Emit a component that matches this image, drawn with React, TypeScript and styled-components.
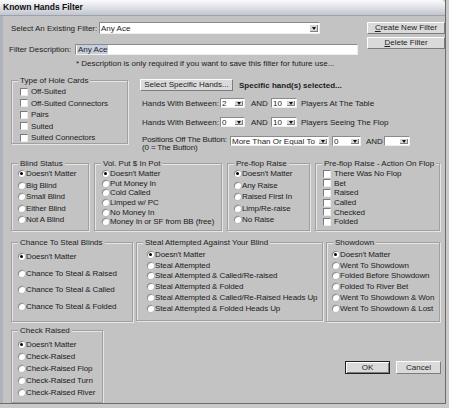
import React from 'react';
import styled, { createGlobalStyle } from 'styled-components';

const GlobalStyle = createGlobalStyle`
  html, body {
    margin: 0;
    padding: 0;
    background: #c9c9c9;
  }
  body {
    font-family: "Liberation Sans", Arial, sans-serif;
    font-size: 8px;
    color: #1c1c1c;
  }
`;

const Window = styled.div`
  width: 446px;
  height: 404px;
  box-sizing: border-box;
  border-right: 1px solid #6b6b6b;
  border-bottom: 1px solid #6b6b6b;
  background: #c3c3c3;
  display: flex;
  flex-direction: column;
  overflow: hidden;
`;

const TitleBar = styled.div`
  flex: none;
  height: 15px;
  padding-left: 3px;
  background: linear-gradient(#fbfbfd, #dcdee4 55%, #c2c5cf);
  border-bottom: 1px solid #9da1ab;
  border-top-right-radius: 4px;
  font-size: 8.5px;
  font-weight: bold;
  line-height: 15px;
  color: #111;
`;

const Body = styled.div`
  flex: 1;
  display: flex;
  flex-direction: column;
  padding: 6px 4px 0 8px;
  border-left: 3px solid #aeb2bd;
`;

const TopArea = styled.div`
  display: flex;
  margin-right: -4px;
`;

const LeftCol = styled.div`
  width: 356px;
  display: flex;
  flex-direction: column;
`;

const FieldRow = styled.div<{ $mt?: number; $ml?: number; $h: number }>`
  display: flex;
  align-items: center;
  height: ${p => p.$h}px;
  margin-top: ${p => p.$mt || 0}px;
  margin-left: ${p => p.$ml || 0}px;
`;

const Label = styled.span<{ $w: number }>`
  flex: none;
  width: ${p => p.$w}px;
  white-space: nowrap;
`;

const TextInput = styled.div<{ $w: number }>`
  width: ${p => p.$w}px;
  height: 100%;
  box-sizing: border-box;
  background: #fff;
  border: 1px solid;
  border-color: #8a8a8a #eeeeee #eeeeee #8a8a8a;
  display: flex;
  align-items: center;
  padding-left: 1px;
`;

const Selected = styled.span`
  background: #c7cedd;
  padding: 0 1px;
`;

const Note = styled.div`
  margin-top: 4px;
  padding-left: 65px;
  line-height: 9px;
  white-space: nowrap;
`;

const ButtonCol = styled.div`
  display: flex;
  flex-direction: column;
  gap: 3px;
`;

const Button = styled.button<{ $w: number; $h?: number; $default?: boolean }>`
  flex: none;
  width: ${p => p.$w}px;
  height: ${p => p.$h || 12}px;
  padding: 0;
  margin: 0;
  box-sizing: border-box;
  background: #dadada;
  border: 1px solid;
  border-color: ${p => (p.$default ? '#222' : '#fdfdfd #7c7c7c #7c7c7c #fdfdfd')};
  box-shadow: ${p => (p.$default ? 'inset 1px 1px 0 #fff, inset -1px -1px 0 #7c7c7c' : 'none')};
  font-family: "Liberation Sans", Arial, sans-serif;
  font-size: 8px;
  color: #1c1c1c;
  line-height: 1;
  cursor: default;
`;

const Select = styled.div<{ $w: number; $ml?: number }>`
  flex: none;
  width: ${p => p.$w}px;
  height: 100%;
  margin-left: ${p => p.$ml || 0}px;
  box-sizing: border-box;
  background: #fff;
  border: 1px solid;
  border-color: #8a8a8a #eeeeee #eeeeee #8a8a8a;
  display: flex;
  align-items: stretch;
`;

const SelectText = styled.span`
  flex: 1;
  padding-left: 1px;
  display: flex;
  align-items: center;
  white-space: nowrap;
  overflow: hidden;
`;

const DropButton = styled.span`
  flex: none;
  width: 9px;
  margin: 1px;
  background: #d6d6d6;
  box-shadow: inset 1px 1px 0 #fff, inset -1px -1px 0 #808080;
  display: flex;
  align-items: center;
  justify-content: center;
  &::after {
    content: '';
    border-left: 2.5px solid transparent;
    border-right: 2.5px solid transparent;
    border-top: 3px solid #111;
  }
`;

const MiddleRow = styled.div`
  display: flex;
  margin-top: 12px;
`;

const Controls = styled.div`
  margin-left: 12px;
  margin-top: -1px;
  display: flex;
  flex-direction: column;
`;

const BoldText = styled.span`
  margin-left: 6px;
  font-weight: bold;
  white-space: nowrap;
`;

const AndLabel = styled.span<{ $w: number; $pl: number }>`
  flex: none;
  width: ${p => p.$w}px;
  padding-left: ${p => p.$pl}px;
  box-sizing: border-box;
`;

const TrailText = styled.span`
  margin-left: 4px;
  white-space: nowrap;
`;

const TwoLineLabel = styled.span`
  flex: none;
  width: 88px;
  align-self: flex-start;
  line-height: 8px;
  letter-spacing: -0.15px;
  white-space: nowrap;
`;

const GroupRow = styled.div<{ $mt: number; $gap: number }>`
  display: flex;
  gap: ${p => p.$gap}px;
  margin-top: ${p => p.$mt}px;
`;

const GroupBox = styled.div<{ $w: number; $h: number; $pt: number; $pl: number }>`
  position: relative;
  flex: none;
  box-sizing: border-box;
  width: ${p => p.$w}px;
  height: ${p => p.$h}px;
  padding: ${p => p.$pt}px 0 0 ${p => p.$pl}px;
  border: 1px solid #a0a0a0;
  box-shadow: inset 1px 1px 0 #e6e6e6, 1px 1px 0 #e6e6e6;
`;

const Legend = styled.span`
  position: absolute;
  top: -5px;
  left: 6px;
  padding: 0 2px;
  background: #c3c3c3;
  line-height: 9px;
  white-space: nowrap;
`;

const Option = styled.div<{ $step: number }>`
  display: flex;
  align-items: center;
  height: ${p => p.$step}px;
  letter-spacing: -0.1px;
  white-space: nowrap;
`;

const RadioMark = styled.span<{ $on?: boolean }>`
  position: relative;
  flex: none;
  width: 7px;
  height: 7px;
  margin-right: 1px;
  border-radius: 50%;
  background: #fff;
  box-shadow: inset 1px 1px 0 #8c8c8c, 0 0 0 0.5px #b5b5b5;
  &::after {
    content: '';
    display: ${p => (p.$on ? 'block' : 'none')};
    position: absolute;
    left: 2px;
    top: 2px;
    width: 3px;
    height: 3px;
    border-radius: 50%;
    background: #000;
  }
`;

const CheckMark = styled.span`
  flex: none;
  width: 8px;
  height: 8px;
  margin-right: 3px;
  box-sizing: border-box;
  background: #fff;
  border: 1px solid;
  border-color: #7a7a7a #ececec #ececec #7a7a7a;
`;

const BottomRow = styled.div`
  display: flex;
  margin-top: 8px;
`;

const DialogButtons = styled.div`
  margin-left: auto;
  margin-top: 31px;
  display: flex;
  gap: 6px;
  align-self: flex-start;
`;

const Underline = styled.span`
  text-decoration: underline;
`;

type GroupProps = {
  title: string;
  items: string[];
  kind: 'radio' | 'check';
  w: number;
  h: number;
  pt: number;
  pl: number;
  step: number;
};

const Group = ({ title, items, kind, w, h, pt, pl, step }: GroupProps) => (
  <GroupBox $w={w} $h={h} $pt={pt} $pl={pl}>
    <Legend>{title}</Legend>
    {items.map((item, i) => (
      <Option key={item} $step={step}>
        {kind === 'radio' ? <RadioMark $on={i === 0} /> : <CheckMark />}
        {item}
      </Option>
    ))}
  </GroupBox>
);

const Dropdown = ({ w, value, ml }: { w: number; value: string; ml?: number }) => (
  <Select $w={w} $ml={ml}>
    <SelectText>{value}</SelectText>
    <DropButton />
  </Select>
);

const holeCards = ['Off-Suited', 'Off-Suited Connectors', 'Pairs', 'Suited', 'Suited Connectors'];
const blindStatus = ["Doesn't Matter", 'Big Blind', 'Small Blind', 'Either Blind', 'Not A Blind'];
const volPut = ["Doesn't Matter", 'Put Money In', 'Cold Called', 'Limped w/ PC', 'No Money In', 'Money In or SF from BB (free)'];
const preflopRaise = ["Doesn't Matter", 'Any Raise', 'Raised First In', 'Limp/Re-raise', 'No Raise'];
const flopAction = ['There Was No Flop', 'Bet', 'Raised', 'Called', 'Checked', 'Folded'];
const chanceSteal = ["Doesn't Matter", 'Chance To Steal & Raised', 'Chance To Steal & Called', 'Chance To Steal & Folded'];
const stealAttempt = [
  "Doesn't Matter",
  'Steal Attempted',
  'Steal Attempted & Called/Re-raised',
  'Steal Attempted & Folded',
  'Steal Attempted & Called/Re-Raised Heads Up',
  'Steal Attempted & Folded Heads Up',
];
const showdown = ["Doesn't Matter", 'Went To Showdown', 'Folded Before Showdown', 'Folded To River Bet', 'Went To Showdown & Won', 'Went To Showdown & Lost'];
const checkRaised = ["Doesn't Matter", 'Check-Raised', 'Check-Raised Flop', 'Check-Raised Turn', 'Check-Raised River'];

const App: React.FC = () => {
  return (
    <>
      <GlobalStyle />
      <Window>
        <TitleBar>Known Hands Filter</TitleBar>
        <Body>
          <TopArea>
            <LeftCol>
              <FieldRow $h={12}>
                <Label $w={88}>Select An Existing Filter:</Label>
                <Dropdown w={221} value="Any Ace" />
              </FieldRow>
              <FieldRow $h={11} $mt={10} $ml={-2}>
                <Label $w={66}>Filter Description:</Label>
                <TextInput $w={283}>
                  <Selected>Any Ace</Selected>
                </TextInput>
              </FieldRow>
              <Note>* Description is only required if you want to save this filter for future use...</Note>
            </LeftCol>
            <ButtonCol>
              <Button $w={78}>
                <Underline>C</Underline>reate New Filter
              </Button>
              <Button $w={78}>
                <Underline>D</Underline>elete Filter
              </Button>
            </ButtonCol>
          </TopArea>

          <MiddleRow>
            <Group title="Type of Hole Cards" items={holeCards} kind="check" w={117} h={64} pt={5} pl={8} step={11.5} />
            <Controls>
              <FieldRow $h={12}>
                <Button $w={93}>Select Specific Hands...</Button>
                <BoldText>Specific hand(s) selected...</BoldText>
              </FieldRow>
              <FieldRow $h={10} $mt={7} $ml={2}>
                <Label $w={78}>Hands With Between:</Label>
                <Dropdown w={25} value="2" />
                <AndLabel $w={26} $pl={6}>AND</AndLabel>
                <Dropdown w={26} value="10" />
                <TrailText>Players At The Table</TrailText>
              </FieldRow>
              <FieldRow $h={10} $mt={9} $ml={2}>
                <Label $w={78}>Hands With Between:</Label>
                <Dropdown w={25} value="0" />
                <AndLabel $w={26} $pl={6}>AND</AndLabel>
                <Dropdown w={26} value="10" />
                <TrailText>Players Seeing The Flop</TrailText>
              </FieldRow>
              <FieldRow $h={10} $mt={9} $ml={2}>
                <TwoLineLabel>
                  Positions Off The Button:
                  <br />
                  (0 = The Button)
                </TwoLineLabel>
                <Dropdown w={99} value="More Than Or Equal To" />
                <Dropdown w={29} value="0" ml={3} />
                <AndLabel $w={23} $pl={5}>AND</AndLabel>
                <Dropdown w={26} value="" />
              </FieldRow>
            </Controls>
          </MiddleRow>

          <GroupRow $mt={17} $gap={5}>
            <Group title="Blind Status" items={blindStatus} kind="radio" w={78} h={68} pt={4} pl={6} step={11.5} />
            <Group title="Vol. Put $ In Pot" items={volPut} kind="radio" w={128} h={68} pt={5} pl={7} step={9.6} />
            <Group title="Pre-flop Raise" items={preflopRaise} kind="radio" w={83} h={68} pt={4} pl={6} step={11.5} />
            <Group title="Pre-flop Raise - Action On Flop" items={flopAction} kind="check" w={125} h={68} pt={5} pl={7} step={9.6} />
          </GroupRow>

          <GroupRow $mt={11} $gap={3}>
            <Group title="Chance To Steal Blinds" items={chanceSteal} kind="radio" w={122} h={80} pt={5} pl={6} step={16.7} />
            <Group title="Steal Attempted Against Your Blind" items={stealAttempt} kind="radio" w={187} h={79} pt={6} pl={10} step={10.8} />
            <Group title="Showdown" items={showdown} kind="radio" w={114} h={80} pt={6} pl={5} step={10.8} />
          </GroupRow>

          <BottomRow>
            <Group title="Check Raised" items={checkRaised} kind="radio" w={92} h={73} pt={7} pl={6} step={12} />
            <DialogButtons>
              <Button $w={45} $h={13} $default>OK</Button>
              <Button $w={45} $h={13}>Cancel</Button>
            </DialogButtons>
          </BottomRow>
        </Body>
      </Window>
    </>
  );
};

export default App;
